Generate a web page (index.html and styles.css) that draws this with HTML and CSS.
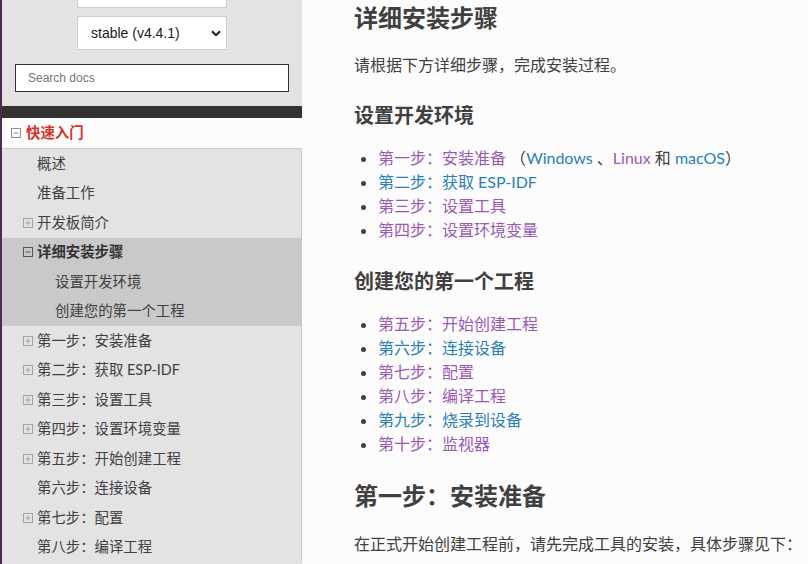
FILE: index.html
```html
<!DOCTYPE html>
<html lang="zh-CN">
<head>
<meta charset="utf-8">
<title>详细安装步骤</title>
<link rel="stylesheet" href="styles.css">
</head>
<body>
<div class="page">
  <div class="stripe"></div>
  <nav class="sidebar">
    <div class="side-search">
      <div class="lang-box"></div>
      <div class="version">
        <select class="version-select"><option>stable (v4.4.1)</option></select>
        <svg class="chev" width="10" height="7" viewBox="0 0 10 7"><path d="M1 1.2l4 4 4-4" fill="none" stroke="#1a1a1a" stroke-width="2"/></svg>
      </div>
      <input class="search" type="text" placeholder="Search docs">
    </div>
    <div class="menu-bar"></div>
    <ul class="menu">
      <li class="l1 current">
        <a class="l1-link"><span class="tog"><svg width="10" height="10" viewBox="0 0 10 10"><rect x="0.5" y="0.5" width="9" height="9" fill="none" stroke="#8e949c"/><path d="M2.5 5h5" stroke="#8e949c"/></svg></span>快速入门</a>
        <ul class="sub">
          <li><a class="l2">概述</a></li>
          <li><a class="l2">准备工作</a></li>
          <li><a class="l2"><span class="tog"><svg width="10" height="10" viewBox="0 0 10 10"><rect x="0.5" y="0.5" width="9" height="9" fill="none" stroke="#a3a3a3"/><path d="M2.5 5h5M5 2.5v5" stroke="#a3a3a3"/></svg></span>开发板简介</a></li>
          <li class="l2-current">
            <a class="l2 cur"><span class="tog"><svg width="10" height="10" viewBox="0 0 10 10"><rect x="0.5" y="0.5" width="9" height="9" fill="none" stroke="#555"/><path d="M2.5 5h5" stroke="#555"/></svg></span>详细安装步骤</a>
            <ul class="sub">
              <li><a class="l3">设置开发环境</a></li>
              <li><a class="l3">创建您的第一个工程</a></li>
            </ul>
          </li>
          <li><a class="l2"><span class="tog"><svg width="10" height="10" viewBox="0 0 10 10"><rect x="0.5" y="0.5" width="9" height="9" fill="none" stroke="#a3a3a3"/><path d="M2.5 5h5M5 2.5v5" stroke="#a3a3a3"/></svg></span>第一步：安装准备</a></li>
          <li><a class="l2"><span class="tog"><svg width="10" height="10" viewBox="0 0 10 10"><rect x="0.5" y="0.5" width="9" height="9" fill="none" stroke="#a3a3a3"/><path d="M2.5 5h5M5 2.5v5" stroke="#a3a3a3"/></svg></span>第二步：获取 ESP-IDF</a></li>
          <li><a class="l2"><span class="tog"><svg width="10" height="10" viewBox="0 0 10 10"><rect x="0.5" y="0.5" width="9" height="9" fill="none" stroke="#a3a3a3"/><path d="M2.5 5h5M5 2.5v5" stroke="#a3a3a3"/></svg></span>第三步：设置工具</a></li>
          <li><a class="l2"><span class="tog"><svg width="10" height="10" viewBox="0 0 10 10"><rect x="0.5" y="0.5" width="9" height="9" fill="none" stroke="#a3a3a3"/><path d="M2.5 5h5M5 2.5v5" stroke="#a3a3a3"/></svg></span>第四步：设置环境变量</a></li>
          <li><a class="l2"><span class="tog"><svg width="10" height="10" viewBox="0 0 10 10"><rect x="0.5" y="0.5" width="9" height="9" fill="none" stroke="#a3a3a3"/><path d="M2.5 5h5M5 2.5v5" stroke="#a3a3a3"/></svg></span>第五步：开始创建工程</a></li>
          <li><a class="l2">第六步：连接设备</a></li>
          <li><a class="l2"><span class="tog"><svg width="10" height="10" viewBox="0 0 10 10"><rect x="0.5" y="0.5" width="9" height="9" fill="none" stroke="#a3a3a3"/><path d="M2.5 5h5M5 2.5v5" stroke="#a3a3a3"/></svg></span>第七步：配置</a></li>
          <li><a class="l2">第八步：编译工程</a></li>
        </ul>
      </li>
    </ul>
  </nav>
  <main class="content">
    <h2>详细安装步骤</h2>
    <p>请根据下方详细步骤，完成安装过程。</p>
    <h3>设置开发环境</h3>
    <ul class="steps">
      <li><a class="v">第一步：安装准备</a> （<a class="b">Windows</a> 、<a class="v">Linux</a> 和 <a class="b">macOS</a>）</li>
      <li><a class="b">第二步：获取 ESP-IDF</a></li>
      <li><a class="v">第三步：设置工具</a></li>
      <li><a class="v">第四步：设置环境变量</a></li>
    </ul>
    <h3>创建您的第一个工程</h3>
    <ul class="steps">
      <li><a class="v">第五步：开始创建工程</a></li>
      <li><a class="b">第六步：连接设备</a></li>
      <li><a class="v">第七步：配置</a></li>
      <li><a class="v">第八步：编译工程</a></li>
      <li><a class="b">第九步：烧录到设备</a></li>
      <li><a class="v">第十步：监视器</a></li>
    </ul>
    <h2 class="next">第一步：安装准备</h2>
    <p>在正式开始创建工程前，请先完成工具的安装，具体步骤见下：</p>
  </main>
</div>
</body>
</html>
```
FILE: styles.css
```css
* { box-sizing: border-box; }
html, body { margin: 0; padding: 0; height: 100%; overflow: hidden; }
body {
  background: #fcfcfc;
  color: #404040;
  font-family: Lato, "Noto Sans CJK SC", sans-serif;
  font-size: 16px;
}
.page { display: flex; height: 564px; }
.stripe { width: 2px; flex: none; background: #4e2a4c; }
.sidebar { width: 300px; flex: none; background: #e3e3e3; display: flex; flex-direction: column; }

.side-search { display: flex; flex-direction: column; align-items: center; padding-bottom: 14px; }
.lang-box {
  width: 150px; height: 8px; background: #fff;
  border: 1px solid #cfcfcf; border-top: none;
}
.version { position: relative; margin-top: 8px; width: 150px; height: 34px; }
.version-select {
  appearance: none; -webkit-appearance: none;
  width: 100%; height: 100%;
  background: #fff; border: 1px solid #cfcfcf; border-radius: 0;
  font-family: "Liberation Sans", Arial, sans-serif; font-size: 14px; color: #1a1a1a;
  padding: 0 0 0 13px; margin: 0;
}
.chev { position: absolute; left: 134px; top: 14px; }
.search {
  margin-top: 14px; width: 274px; height: 28px;
  border: 1px solid #333; background: #fff; border-radius: 0;
  padding: 0 12px; font-family: "Liberation Sans", Arial, sans-serif; font-size: 12px; color: #333;
}
.search::placeholder { color: #757575; }
.menu-bar { height: 12px; background: #343131; }

.menu, .sub { list-style: none; margin: 0; padding: 0; }
.menu { font-size: 14.4px; }
.menu a { display: flex; align-items: center; line-height: 18px; color: #404040; text-decoration: none; white-space: nowrap; }
.tog { display: flex; width: 14px; flex: none; margin-left: -14px; }
.tog svg { display: block; }

.l1-link {
  background: #fcfcfc; color: #d6302b !important; font-weight: 700;
  padding: 6px 16px 6px 24px; border-bottom: 1px solid #c9c9c9;
}
.l1-link .tog { margin-left: -15px; width: 15px; }
.l2 {
  padding: 5.75px 16px 5.75px 35px;
  border-right: 1px solid #c9c9c9;
}
.l2.cur { background: #c9c9c9; font-weight: 700; color: #333 !important; }
.l3 {
  padding: 5.75px 16px 5.75px 53px; background: #c9c9c9;
  border-right: 1px solid #c9c9c9;
}

.content { flex: 1; min-width: 0; padding: 3px 0 0 52px; }
.content h2 { font-size: 24px; line-height: 30px; font-weight: 700; margin: 0 0 20px; color: #404040; }
.content h2.next { margin-top: 2px; margin-bottom: 21px; }
.content h3 { font-size: 20px; line-height: 28px; font-weight: 700; margin: 0 0 17px; color: #404040; }
.content p { line-height: 24px; margin: 0 0 24px; white-space: nowrap; }
.steps { margin: 0 0 25px; padding: 0; }
.steps li { list-style: disc; margin-left: 24px; line-height: 24px; }
.steps a { text-decoration: none; cursor: pointer; }
.steps a.b { color: #2980b9; }
.steps a.v { color: #9b59b6; }
```
